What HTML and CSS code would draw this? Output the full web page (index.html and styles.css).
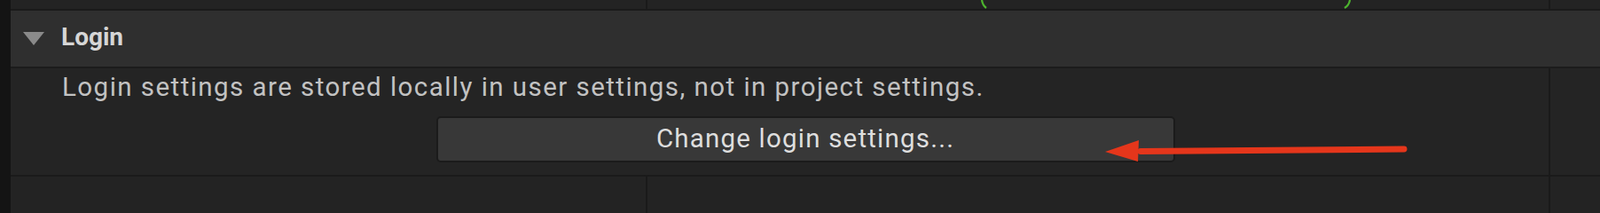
FILE: index.html
```html
<!DOCTYPE html>
<html lang="en">
<head>
<meta charset="utf-8">
<title>Login settings</title>
<link rel="stylesheet" href="styles.css">
</head>
<body>
<div class="panel">
  <div class="gutter"></div>
  <div class="content">
    <div class="toprow">
      <div class="cell"></div>
      <div class="cell">
        <svg class="brackets" viewBox="0 0 1016 10" preserveAspectRatio="none">
          <path d="M377 0 Q378 6 382 9" />
          <path d="M792 0 Q791 6 786 9" />
        </svg>
      </div>
      <div class="cell"></div>
    </div>
    <div class="header">
      <span class="caret"></span>
      <span class="title">Login</span>
    </div>
    <div class="bodyrow">
      <div class="main">
        <p class="note">Login settings are stored locally in user settings, not in project settings.</p>
        <button class="btn" type="button">Change login settings...</button>
      </div>
      <div class="side"></div>
    </div>
    <div class="bottomrow">
      <div class="cell"></div>
      <div class="cell"></div>
      <div class="cell"></div>
    </div>
  </div>
  <svg class="arrow" viewBox="0 0 350 30" width="350" height="30">
    <path class="shaft" d="M337 10 L40 12.5" />
    <polygon class="head" points="0,13 38,0 37,24" />
  </svg>
</div>
</body>
</html>
```

FILE: styles.css
```css
html, body {
  margin: 0;
  padding: 0;
  background: #232323;
}

body {
  font-family: Roboto, "Liberation Sans", sans-serif;
  width: 1804px;
}

.panel {
  position: relative;
  display: flex;
  height: 100vh;
  min-height: 220px;
}

.gutter {
  width: 12px;
  flex: none;
  background: #141414;
}

.content {
  flex: 1;
  display: flex;
  flex-direction: column;
}

.toprow,
.bottomrow {
  display: grid;
  grid-template-columns: 716px 1016px 1fr;
  column-gap: 2px;
  background: #1a1a1a;
}

.toprow {
  height: 10px;
  border-bottom: 2px solid #1a1a1a;
}

.bottomrow {
  flex: 1;
  border-top: 2px solid #1a1a1a;
}

.cell {
  background: #232323;
  position: relative;
}

.brackets {
  display: block;
  width: 100%;
  height: 10px;
}

.brackets path {
  fill: none;
  stroke: #4db52e;
  stroke-width: 2.2;
}

.header {
  height: 65px;
  box-sizing: border-box;
  display: flex;
  align-items: center;
  padding: 0 0 3px 14px;
  background: #2f2f2f;
  border-bottom: 2px solid #1c1c1c;
}

.caret {
  width: 0;
  height: 0;
  border-left: 12.5px solid transparent;
  border-right: 12.5px solid transparent;
  border-top: 15px solid #8a8a8a;
  margin-right: 19px;
  margin-top: 2px;
}

.title {
  font-size: 28px;
  font-weight: 700;
  color: #d6d6d6;
  line-height: 34px;
}

.bodyrow {
  display: grid;
  grid-template-columns: 1734px 1fr;
  column-gap: 2px;
  background: #1a1a1a;
}

.main,
.side {
  background: #242424;
}

.main {
  padding: 4px 0 14px 58px;
  display: flex;
  flex-direction: column;
}

.note {
  margin: 0;
  font-size: 29.5px;
  letter-spacing: 1.45px;
  line-height: 34px;
  color: #c2c2c2;
  white-space: nowrap;
}

.btn {
  margin: 16px auto 0;
  width: 833px;
  height: 52px;
  box-sizing: border-box;
  background: #383838;
  border: 2px solid #1b1b1b;
  border-radius: 5px;
  font-family: Roboto, "Liberation Sans", sans-serif;
  font-size: 29.5px;
  letter-spacing: 1.2px;
  color: #dedede;
  padding: 0 0 2px;
  display: flex;
  align-items: center;
  justify-content: center;
}

.arrow {
  position: absolute;
  left: 1246px;
  top: 158px;
  overflow: visible;
}

.shaft {
  fill: none;
  stroke: #e5361b;
  stroke-width: 7;
  stroke-linecap: round;
}

.head {
  fill: #e5361b;
}
```
